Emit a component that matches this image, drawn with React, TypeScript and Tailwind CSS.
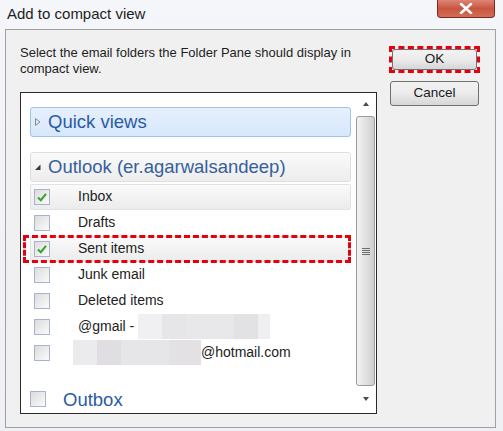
type Row = {
  label: string;
  checked?: boolean;
  highlight?: boolean;
  blurBefore?: boolean;
  blurAfter?: boolean;
};

const rows: Row[] = [
  { label: "Inbox", checked: true, highlight: true },
  { label: "Drafts" },
  { label: "Sent items", checked: true, highlight: true },
  { label: "Junk email" },
  { label: "Deleted items" },
  { label: "@gmail - ", blurAfter: true },
  { label: "@hotmail.com", blurBefore: true },
];

function Check({ checked }: { checked?: boolean }) {
  return (
    <div className="flex h-[16px] w-[16px] shrink-0 items-center justify-center border border-[#a9b3cf] bg-gradient-to-br from-[#dcdcdc] to-[#fbfbfb]">
      {checked && (
        <svg width="12" height="12" viewBox="0 0 12 12">
          <path d="M2 6.5 L4.8 9.2 L10 2.8" fill="none" stroke="#2fa52f" strokeWidth="2" />
        </svg>
      )}
    </div>
  );
}

function Blur({ widths }: { widths: string[] }) {
  return (
    <div className="flex h-[25px]">
      {widths.map((c, i) => (
        <div key={i} className={c} />
      ))}
    </div>
  );
}

function FolderRow({ row }: { row: Row }) {
  return (
    <div
      className={`flex h-[26px] items-center rounded-[2px] pl-[3px] ${
        row.highlight ? "border border-[#e2e2e2] bg-gradient-to-b from-[#fafafa] to-[#ececec]" : "border border-transparent"
      }`}
    >
      <Check checked={row.checked} />
      {row.blurBefore ? (
        <div className="ml-[23px] flex items-center">
          <Blur widths={["w-[24px] bg-[#ebeaec]", "w-[24px] bg-[#e0dee2]", "w-[48px] bg-[#e6e5e8]", "w-[32px] bg-[#e3e1e4]"]} />
          <span>{row.label}</span>
        </div>
      ) : (
        <div className="ml-[28px] flex items-center">
          <span className="whitespace-pre">{row.label}</span>
          {row.blurAfter && (
            <Blur widths={["w-[24px] bg-[#f0eff1]", "w-[24px] bg-[#e6e5e8]", "w-[48px] bg-[#e8e7ea]", "w-[24px] bg-[#e2e1e4]", "w-[12px] bg-[#efeff1]"]} />
          )}
        </div>
      )}
    </div>
  );
}

function ListBox() {
  return (
    <div className="mt-[15px] flex h-[322px] w-[357px] border border-[#2b2b2b] bg-white">
      <div className="flex flex-1 flex-col pl-[9px] pr-[4px] pt-[14px] text-[14px] text-[#222222]">
        <div className="flex h-[31px] items-center rounded-[3px] border border-[#9ec3ee] bg-gradient-to-b from-[#e6f0fd] to-[#d7e7fc] pl-[3px] text-[18.5px] text-[#2a5ba4]">
          <svg width="8" height="10" viewBox="0 0 8 10" className="mr-[6px]">
            <path d="M1.5 1.5 L6 5 L1.5 8.5 Z" fill="none" stroke="#8a8a8a" strokeWidth="1" />
          </svg>
          Quick views
        </div>
        <div className="mt-[15px] flex h-[31px] items-center rounded-[3px] border border-[#dedede] bg-gradient-to-b from-[#fafafa] to-[#ededed] pl-[3px] text-[18.5px] text-[#36609c]">
          <svg width="8" height="10" viewBox="0 0 8 10" className="mr-[6px]">
            <path d="M1 8 L6.5 8 L6.5 2.5 Z" fill="#3a3a3a" />
          </svg>
          Outlook (er.agarwalsandeep)
        </div>
        <div className="mt-[2px] flex flex-col">
          {rows.map((r) =>
            r.label === "Sent items" ? (
              <div key={r.label} className="relative">
                <FolderRow row={r} />
                <div className="absolute -left-[7px] -top-[1px] bottom-[-1px] right-0 border-[3px] border-dashed border-[#e3000f]" />
              </div>
            ) : (
              <FolderRow key={r.label} row={r} />
            )
          )}
        </div>
        <div className="mt-[20px] flex items-center text-[18.5px] text-[#2a5ba4]">
          <Check />
          <span className="ml-[17px]">Outbox</span>
        </div>
      </div>
      <div className="flex w-[21px] flex-col items-center pb-[3px] pt-[4px]">
        <svg width="8" height="6" viewBox="0 0 8 6" className="mb-[9px] mt-[4px]">
          <path d="M1 5 L4 1 L7 5 Z" fill="#4a4a4a" />
        </svg>
        <div className="flex w-[19px] flex-1 items-center justify-center rounded-[3px] border border-[#9a9a9a] bg-gradient-to-r from-[#f3f3f3] via-[#e2e2e2] to-[#cfcfcf]">
          <svg width="8" height="8" viewBox="0 0 8 8">
            <path d="M0 1.5 H8 M0 3.5 H8 M0 5.5 H8 M0 7.5 H8" stroke="#6e6e6e" strokeWidth="1" />
          </svg>
        </div>
        <svg width="8" height="6" viewBox="0 0 8 6" className="mb-[8px] mt-[10px]">
          <path d="M1 1 L4 5 L7 1 Z" fill="#4a4a4a" />
        </svg>
      </div>
    </div>
  );
}

function Button({ label, className }: { label: string; className: string }) {
  return (
    <div
      className={`flex items-center justify-center rounded-[3px] border border-[#707070] bg-gradient-to-b from-[#f2f2f2] via-[#ebebeb] to-[#d6d6d6] text-[13.5px] text-[#1a1a1a] ${className}`}
    >
      {label}
    </div>
  );
}

export default function App() {
  return (
    <div
      className="relative h-[431px] w-[503px] overflow-hidden bg-gradient-to-b from-[#f4f6f9] to-[#eef0f3]"
      style={{ fontFamily: "'Liberation Sans', Arial, sans-serif" }}
    >
      <div className="flex h-[29px] items-start justify-between pl-[7px] pr-[8px]">
        <div className="pt-[3px] text-[15px] text-[#1e1e1e]">Add to compact view</div>
        <div className="flex h-[18px] w-[58px] items-center justify-center rounded-b-[4px] border border-t-0 border-[#7b2a22] bg-gradient-to-b from-[#dc8676] via-[#c9553f] to-[#d26e54]">
          <svg width="14" height="11" viewBox="0 0 14 11">
            <path d="M2 1 L12 10 M12 1 L2 10" stroke="#ffffff" strokeWidth="2.6" strokeLinecap="round" />
          </svg>
        </div>
      </div>
      <div className="ml-[5px] flex h-[399px] w-[491px] border border-[#a0a0a0] bg-[#f0f0f0]">
        <div className="flex flex-col pl-[14px] pt-[15px]">
          <div className="w-[356px] text-[13px] leading-[16px] text-[#1e1e1e]">
            Select the email folders the Folder Pane should display in compact view.
          </div>
          <ListBox />
        </div>
        <div className="flex flex-col pl-[12px] pt-[16px]">
          <div className="h-[27px] w-[91px] border-[3px] border-dashed border-[#e3000f]">
            <Button label="OK" className="h-full w-full" />
          </div>
          <div className="ml-[1px] mt-[8px]">
            <Button label="Cancel" className="h-[25px] w-[89px]" />
          </div>
        </div>
      </div>
    </div>
  );
}
